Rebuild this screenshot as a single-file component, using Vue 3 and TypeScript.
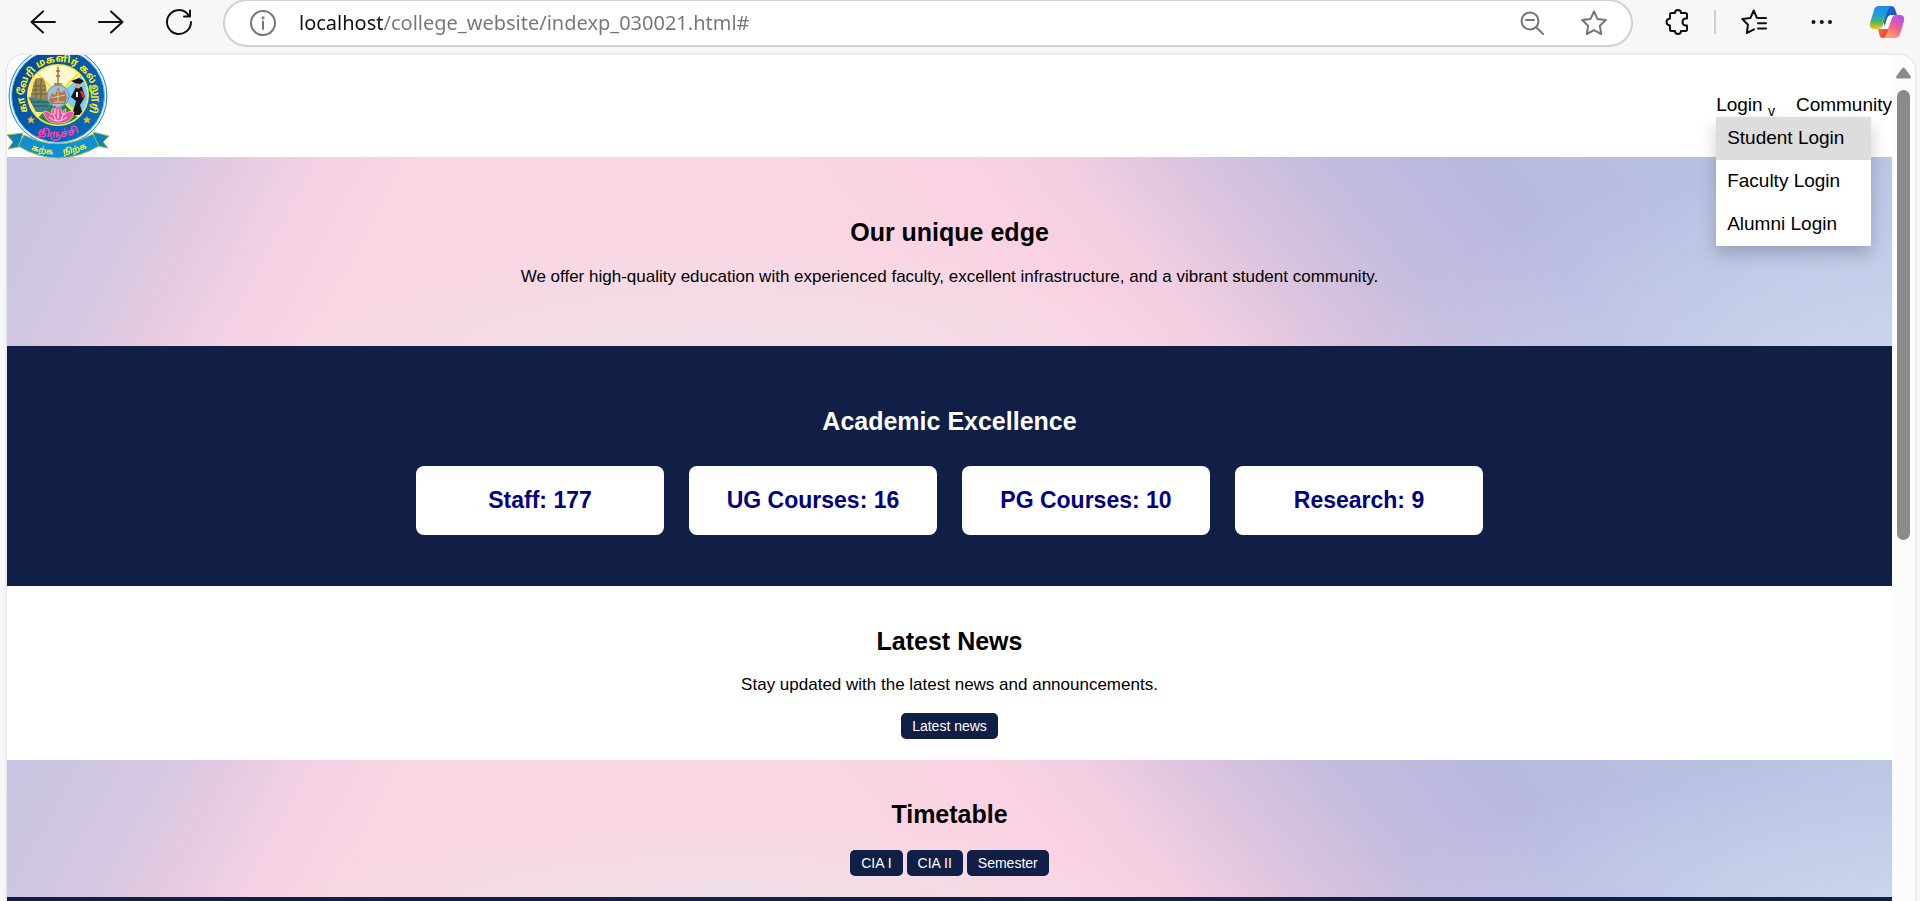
<script setup lang="ts">
import { ref } from 'vue'

const address = ref('localhost/college_website/indexp_030021.html#')
const loginLinks: string[] = ['Student Login', 'Faculty Login', 'Alumni Login']
const stats: string[] = ['Staff: 177', 'UG Courses: 16', 'PG Courses: 10', 'Research: 9']
const timetables: string[] = ['CIA I', 'CIA II', 'Semester']
</script>

<template>
  <div class="browser">
    <div class="toolbar">
      <div class="history">
        <button type="button" aria-label="Back">
          <svg width="28" height="28" viewBox="0 0 28 28"><path d="M26 14H2.500M14 3.500L2.500 14L14 24.500" /></svg>
        </button>
        <button type="button" aria-label="Forward">
          <svg width="28" height="28" viewBox="0 0 28 28"><path d="M2 14H25.500M14 3.500L25.500 14L14 24.500" /></svg>
        </button>
        <button type="button" aria-label="Refresh">
          <svg width="28" height="28" viewBox="0 0 28 28"><path d="M26 14A12 12 0 1 1 21 4.300L24.500 8.300M25 2.500V8.500H19" /></svg>
        </button>
      </div>
      <div class="omnibox">
        <button type="button" class="grey" aria-label="Site information">
          <svg width="28" height="28" viewBox="0 0 28 28"><circle cx="14" cy="14" r="12" /><path d="M14 12.500V20" /><circle cx="14" cy="8.800" r=".6" /></svg>
        </button>
        <input v-model="address" class="address" type="text" aria-label="Address" spellcheck="false" />
        <button type="button" class="grey" aria-label="Zoom out">
          <svg width="28" height="28" viewBox="0 0 28 28"><circle cx="12" cy="12" r="8.500" /><path d="M18.200 18.200L25 25M8 11H16" /></svg>
        </button>
        <button type="button" class="grey" aria-label="Add to favorites">
          <svg width="28" height="28" viewBox="0 0 28 28"><path d="M14 2.500L17.500 9.900L25.800 11L19.800 16.700L21.200 25L14 21.100L6.800 25L8.200 16.700L2.200 11L10.500 9.900Z" /></svg>
        </button>
      </div>
      <div class="tools">
        <button type="button" aria-label="Extensions">
          <svg width="28" height="28" viewBox="0 0 28 28"><path d="M6 6.500Q6 5 7.500 5H11Q11 2 14 2T17 5H21.500Q23 5 23 6.500V10.500H21.500Q18.500 11 18.500 14T21.500 17.500H23V21.500Q23 23 21.500 23H17Q17 26 14 26T11 23H7.500Q6 23 6 21.500V17.500Q2.500 17 2.500 14T6 10.500Z" /></svg>
        </button>
        <span class="divider"></span>
        <button type="button" aria-label="Favorites">
          <svg width="28" height="28" viewBox="0 0 28 28"><path d="M18.500 10L16.800 9.700L13.700 2.500L10.500 9.900L2.300 11L8 16.700L6.800 25L14 21.300M18.500 10H26M18 15.200H26M18 20.400H26" /></svg>
        </button>
        <button type="button" aria-label="Settings and more">
          <svg class="dots" width="28" height="28" viewBox="0 0 28 28"><circle cx="5.500" cy="14" r="2" /><circle cx="13.800" cy="14" r="2" /><circle cx="22" cy="14" r="2" /></svg>
        </button>
        <button type="button" class="assistant" aria-label="Copilot">
          <svg width="36" height="34" viewBox="0 0 36 34">
            <defs>
              <linearGradient id="ribbonLeft" x1="0" y1="0" x2="0" y2="1"><stop offset="0" stop-color="#1d8ee8" /><stop offset=".4" stop-color="#1b9edb" /><stop offset=".7" stop-color="#58b55b" /><stop offset="1" stop-color="#f4c915" /></linearGradient>
              <linearGradient id="ribbonRight" x1=".8" y1="0" x2=".3" y2="1"><stop offset="0" stop-color="#ad55ee" /><stop offset=".5" stop-color="#ed5d9b" /><stop offset="1" stop-color="#ffa85c" /></linearGradient>
              <linearGradient id="ribbonTop" x1="0" y1="0" x2="1" y2="1"><stop offset="0" stop-color="#1776dd" /><stop offset="1" stop-color="#1c3fc0" /></linearGradient>
              <linearGradient id="ribbonFoot" x1="0" y1="0" x2="1" y2="1"><stop offset="0" stop-color="#f8b42b" /><stop offset=".6" stop-color="#ec4b3e" /><stop offset="1" stop-color="#f07059" /></linearGradient>
            </defs>
            <path fill="url(#ribbonTop)" d="M10 1H22Q25 1 26 4L28 10H23Q20 10 19 13L16 22Z" />
            <path fill="url(#ribbonFoot)" d="M9 24H13Q16 24 17 21L20 12L27 10L21 30Q20 33 17 33H14Q11 33 10.500 30Z" />
            <path fill="#fff" d="M17.500 15Q19 10 22 10H25L19 24H13Q15.500 22 16 20Z" />
            <path fill="url(#ribbonLeft)" d="M10 1H23Q19.500 2 18.500 6L14 20Q12.500 24 8 24H4Q0 23 1 18L5 5Q6 1 10 1Z" />
            <path fill="url(#ribbonRight)" d="M26 33H14Q17 32 18 28L22.500 14Q24 10 28 10H32Q36 11 35 16L31 29Q30 33 26 33Z" />
          </svg>
        </button>
      </div>
    </div>

    <div class="pane">
      <div class="page">
        <header class="site-header">
          <svg class="emblem" width="102" height="102" viewBox="0 0 102 102" role="img" aria-label="College emblem">
            <defs>
              <clipPath id="scene"><circle cx="51" cy="40" r="29.500" /></clipPath>
              <path id="nameArc" d="M20.700 55.400A34 34 0 1 1 82.300 55.400" />
              <path id="townArc" d="M22 75Q51 91 80 73" />
              <path id="mottoArc" d="M16 91Q51 109 88 89" />
              <linearGradient id="bandFill" x1="0" y1="0" x2="1" y2="1"><stop offset="0" stop-color="#064496" /><stop offset="1" stop-color="#0870c0" /></linearGradient>
            </defs>
            <circle cx="51" cy="41" r="49" fill="#eaf8ff" stroke="#2b78b5" />
            <circle cx="51" cy="41" r="46.500" fill="url(#bandFill)" stroke="#6ac9f4" stroke-width="1" />
            <circle cx="51" cy="40" r="31" fill="#ffe92e" />
            <g clip-path="url(#scene)">
              <rect x="20" y="10" width="62" height="60" fill="#fff9d2" />
              <path fill="#f7e88a" d="M20 14L51 40L20 67Z" />
              <path fill="#7ecdf0" d="M82 14L51 40L82 67Z" />
              <path fill="#24883b" d="M24 70L51 42L78 70Z" />
              <path stroke="#f4e52c" stroke-width="2" fill="none" d="M31 19L71 60M71 19L31 60" />
              <path fill="#a98452" d="M23 45L27 27L30 23H36L39 30L40 42V47H23Z" />
              <path stroke="#5e6a3e" stroke-width="1" fill="none" d="M26 31H38M25 35H39M24 39H40M29 24V44M34 24V44" />
              <path fill="#3c8387" d="M21 42L45 46L40 57L29 57Z" />
              <path stroke="#28535b" stroke-width="1" fill="none" d="M24 47H42M26 51H41" />
              <path fill="#16171c" d="M64 26L72 23L77 26L72 30ZM69 32L75 32L78 42L73 50L76 60H65L69 46L64 42Z" />
              <circle cx="71" cy="31" r="2.500" fill="#e2a376" />
              <path stroke="#f0f0e8" stroke-width="2" d="M70 37V42" />
              <path stroke="#e62b3a" stroke-width="2.500" d="M74 36L77 43" />
              <path stroke="#9e7432" stroke-width="1.500" fill="none" d="M51 12V30M49 16H53M49 21H53M47 29H55" />
            </g>
            <circle cx="51" cy="41" r="11" fill="#a7bfc9" stroke="#3a9bd3" />
            <path fill="#a87958" d="M42 45L45 38L48 40L51 32L54 38L58 35L60 43L58 49H44Z" />
            <path stroke="#e3c69e" stroke-width="1" fill="none" d="M44 43L58 40M47 47H57M51 35V47" />
            <path fill="#e8549d" stroke="#fbc0dc" stroke-width=".8" d="M36 57Q41 55 45 60Q43 54 47 53Q48 56 48 59Q48 52 51 50Q55 53 55 59Q56 54 59 54Q59 57 57 60Q61 55 67 57Q65 67 56 68H47Q39 67 36 57Z" />
            <path stroke="#fff0f7" stroke-width="1" fill="none" d="M42 62Q51 70 60 62M51 54V64M46 58L49 65M57 58L54 65" />
            <path fill="#ffb224" d="M24 61L25.200 63.600H28L26 65.600L26.700 68.500L24 67L21.300 68.500L22 65.600L20 63.600H22.800ZM80 61L81.200 63.600H84L82 65.600L82.700 68.500L80 67L77.300 68.500L78 65.600L76 63.600H78.800Z" />
            <text class="emblem-name"><textPath href="#nameArc" startOffset="50%" text-anchor="middle">காவேரி மகளிர் கல்லூரி</textPath></text>
            <path fill="#0a81bd" stroke="#a5bd3c" stroke-width="1" d="M0 80L16 78L12 92L1 94L6 87ZM102 81L86 77L90 91L101 93L96 87Z" />
            <path fill="#0d91d2" stroke="#a5bd3c" stroke-width="1" d="M17 80Q51 98 86 79L92 91Q51 115 11 91Z" />
            <text class="emblem-town"><textPath href="#townArc" startOffset="50%" text-anchor="middle">திருச்சி</textPath></text>
            <text class="emblem-motto"><textPath href="#mottoArc" startOffset="50%" text-anchor="middle">கற்க &#160; &#160; நிற்க</textPath></text>
          </svg>
          <nav class="site-nav">
            <div class="menu">
              <a href="#">Login <small>v</small></a>
              <div class="submenu">
                <a v-for="link in loginLinks" :key="link" href="#">{{ link }}</a>
              </div>
            </div>
            <a href="#">Community</a>
          </nav>
        </header>

        <section class="edge pastel">
          <h2>Our unique edge</h2>
          <p>We offer high-quality education with experienced faculty, excellent infrastructure, and a vibrant student community.</p>
        </section>

        <section class="academics">
          <h2>Academic Excellence</h2>
          <div class="stats">
            <h3 v-for="stat in stats" :key="stat">{{ stat }}</h3>
          </div>
        </section>

        <section class="news">
          <h2>Latest News</h2>
          <p>Stay updated with the latest news and announcements.</p>
          <div class="actions"><button type="button">Latest news</button></div>
        </section>

        <section class="timetable pastel">
          <h2>Timetable</h2>
          <div class="actions">
            <button v-for="item in timetables" :key="item" type="button">{{ item }}</button>
          </div>
        </section>
        <footer class="site-footer"></footer>
      </div>
      <div class="scrollbar">
        <svg width="15" height="12" viewBox="0 0 15 12"><path d="M6 1.500Q7.500 -.500 9 1.500L14.500 9Q15.500 11.500 13 11.500H2Q-.500 11.500 .500 9Z" /></svg>
        <span class="thumb"></span>
      </div>
    </div>
  </div>
</template>

<style>
body {
  margin: 0;
  overflow: hidden;
}
</style>

<style scoped>
.browser {
  display: flex;
  flex-direction: column;
  height: 100vh;
  overflow: hidden;
  background: #f7f7f7;
  font-family: "Liberation Sans", Arial, sans-serif;
  color: #000;
}

h2, h3, p {
  margin: 0;
}

a {
  color: inherit;
  text-decoration: none;
}

/* Browser toolbar */
.toolbar {
  display: flex;
  flex: none;
  height: 55px;
}

.toolbar button {
  display: flex;
  padding: 0;
  border: 0;
  background: none;
}

.toolbar svg {
  fill: none;
  stroke: #111;
  stroke-width: 2;
  stroke-linecap: round;
  stroke-linejoin: round;
}

.toolbar .grey svg {
  stroke: #767676;
}

.toolbar .dots {
  fill: #111;
  stroke: none;
}

.toolbar .assistant svg {
  stroke: none;
}

.history {
  display: flex;
  align-items: center;
  gap: 40px;
  height: 44px;
  padding: 0 30px 0 29px;
}

.omnibox {
  display: flex;
  flex: 1;
  align-items: center;
  gap: 34px;
  box-sizing: border-box;
  height: 48px;
  margin-top: -1px;
  padding: 0 23px 0 24px;
  border: 2px solid #d0d0d0;
  border-radius: 24px;
  background: #fff;
}

.address {
  flex: 1;
  min-width: 0;
  margin-left: -12px;
  padding: 0;
  border: 0;
  outline: 0;
  background: linear-gradient(to right, #111 84px, #767676 84px);
  background-clip: text;
  color: transparent;
  font: 20px/30px "Noto Sans", sans-serif;
}

.tools {
  display: flex;
  align-items: center;
  height: 44px;
  padding: 0 15px 0 31px;
}

.divider {
  width: 2px;
  height: 24px;
  margin: 0 24px 0 22px;
  background: #d0d0d0;
}

.tools button + button {
  margin-left: 40px;
}

.tools .assistant {
  margin-left: 33px;
}

/* Web page area */
.pane {
  display: flex;
  flex: 1;
  min-height: 0;
  margin: 0 5px 0 7px;
  overflow: hidden;
  border-radius: 16px 16px 0 0;
  background: #fff;
  box-shadow: 0 0 3px #ccc;
}

.page {
  display: flex;
  flex: 1;
  flex-direction: column;
  min-width: 0;
  overflow: hidden;
}

.page > * {
  flex: none;
}

.site-header {
  display: flex;
  justify-content: space-between;
  position: relative;
  z-index: 1;
  height: 102px;
}

.emblem {
  overflow: visible;
}

.emblem text {
  font-family: "Noto Sans Tamil", "Noto Sans", sans-serif;
  font-weight: bold;
}

.emblem-name {
  fill: #ffec1c;
  font-size: 10px;
}

.emblem-town {
  fill: #ff42b3;
  font-size: 10px;
}

.emblem-motto {
  fill: #fff02c;
  font-size: 8px;
}

.site-nav {
  display: flex;
  gap: 21px;
  padding-top: 38px;
  font-size: 19px;
  line-height: 24px;
}

.menu {
  position: relative;
}

.menu small {
  display: inline-block;
  font-size: 14px;
  line-height: 14px;
  vertical-align: sub;
}

.submenu {
  position: absolute;
  top: 24px;
  left: 0;
  width: 155px;
  background: #fff;
  box-shadow: 0 8px 16px rgba(0, 0, 0, .2);
}

.submenu a {
  display: block;
  padding: 0 11px 2px;
  line-height: 41px;
}

.submenu a:first-child {
  background: #ddd;
}

section {
  text-align: center;
}

h2 {
  font-size: 25px;
  line-height: 30px;
}

p {
  font-size: 17px;
  line-height: 20px;
}

.pastel {
  background:
    radial-gradient(ellipse 24% 60% at 38% 106%, rgba(238, 226, 234, .95), rgba(245, 220, 231, 0)),
    radial-gradient(ellipse 28% 110% at 100% 110%, rgba(207, 217, 239, .9), rgba(200, 210, 235, 0)),
    linear-gradient(118deg, #c7c3e2 0%, #d6c8e1 8%, #e6cbe1 12%, rgba(243, 208, 228, .8) 16%, rgba(249, 210, 226, 0) 21%),
    linear-gradient(50deg, #f9d6e3 45%, #f9d3e3 54%, #f3cfe2 59%, #dfc6df 64%, #c6bcde 71%, #b8b8de 79%, #b8c0e2 90%, #bcc6e5 100%);
}

.edge {
  padding: 60px 0 59px;
}

.edge h2 {
  margin-bottom: 20px;
}

.academics {
  padding: 60px 20px 51px;
  background: #111e46;
  color: #fff;
}

.stats {
  display: flex;
  justify-content: center;
  gap: 25px;
  margin-top: 30px;
}

.stats h3 {
  width: 248px;
  border-radius: 8px;
  background: #fff;
  color: #000080;
  font-size: 23px;
  line-height: 69px;
}

.news {
  padding: 40px 0 21px;
}

.news p {
  margin: 19px 0 18px;
}

.timetable {
  padding: 39px 0 21px;
}

.timetable h2 {
  margin-bottom: 21px;
}

.actions {
  display: flex;
  justify-content: center;
  gap: 4px;
}

.actions button {
  padding: 0 11px;
  border: 0;
  border-radius: 5px;
  background: #111e46;
  color: #fff;
  font: 14px/26px "Liberation Sans", Arial, sans-serif;
}

.site-footer {
  height: 40px;
  background: #111e46;
}

.scrollbar {
  display: flex;
  flex: none;
  flex-direction: column;
  align-items: center;
  gap: 11px;
  width: 23px;
  padding-top: 12px;
  background: #fcfcfc;
  fill: #8b8b8b;
}

.thumb {
  width: 13px;
  height: 54%;
  border-radius: 7px;
  background: #8b8b8b;
}
</style>
